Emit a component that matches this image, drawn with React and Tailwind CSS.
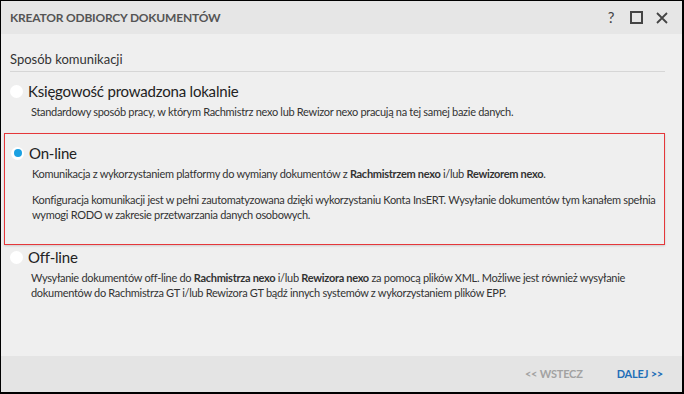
import React from "react";

const Radio = ({ checked }) => (
  <span className="w-[13px] h-[13px] rounded-full bg-white flex items-center justify-center shrink-0">
    {checked && <span className="w-[8px] h-[8px] rounded-full bg-[#1ba1e2]" />}
  </span>
);

const Option = ({ label, checked, children }) => (
  <div>
    <div className="flex items-center gap-[5px] h-[20px]">
      <Radio checked={checked} />
      <span className="text-[15px] leading-[20px] tracking-[-0.2px] text-[#222]">{label}</span>
    </div>
    <div className="pl-[21px] pt-[3px] text-[11px] leading-[15px] tracking-[-0.3px] text-[#333] space-y-[11px]">{children}</div>
  </div>
);

export default function App() {
  return (
    <div className="w-[684px] h-[394px] bg-black pl-px pt-px pr-[2px] pb-[2px] font-['Lato',sans-serif]">
      <div className="w-full h-full bg-[#efefef] flex flex-col">
        <div className="h-[33px] shrink-0 bg-[#e6e6e6] flex items-center pl-[9px] pr-[14px]">
          <span className="text-[12px] font-bold text-[#555] tracking-[-0.2px]">KREATOR ODBIORCY DOKUMENTÓW</span>
          <div className="ml-auto flex items-center gap-[13px] text-[#444]">
            <span className="text-[15px] leading-none w-[12px] text-center">?</span>
            <span className="w-[13px] h-[13px] border-[2px] border-[#444]" />
            <svg width="12" height="12" viewBox="0 0 12 12">
              <path d="M1 1 L11 11 M11 1 L1 11" stroke="#444" strokeWidth="1.8" />
            </svg>
          </div>
        </div>
        <div className="flex-1 px-[9px] pt-[17px]">
          <div className="text-[13px] leading-[16px] text-[#333] pb-[4px] border-b border-[#d6d6d6] mr-[8px]">Sposób komunikacji</div>
          <div className="pt-[9px]">
            <Option label="Księgowość prowadzona lokalnie">
              <p>Standardowy sposób pracy, w którym Rachmistrz nexo lub Rewizor nexo pracują na tej samej bazie danych.</p>
            </Option>
          </div>
          <div className="ml-[-6px] mr-[8px] mt-[14px] border border-[#e5373a] shadow-[0_1px_2px_rgba(0,0,0,0.15)] pl-[6px] pt-[9px] pb-[22px]">
            <Option label="On-line" checked>
              <p>
                Komunikacja z wykorzystaniem platformy do wymiany dokumentów z <b>Rachmistrzem nexo</b> i/lub <b>Rewizorem nexo</b>.
              </p>
              <p>
                Konfiguracja komunikacji jest w pełni zautomatyzowana dzięki wykorzystaniu Konta InsERT. Wysyłanie dokumentów tym kanałem spełnia
                <br />
                wymogi RODO w zakresie przetwarzania danych osobowych.
              </p>
            </Option>
          </div>
          <div className="pt-[2px] pr-[8px]">
            <Option label="Off-line">
              <p>
                Wysyłanie dokumentów off-line do <b>Rachmistrza nexo</b> i/lub <b>Rewizora nexo</b> za pomocą plików XML. Możliwe jest również wysyłanie
                <br />
                dokumentów do Rachmistrza GT i/lub Rewizora GT bądź innych systemów z wykorzystaniem plików EPP.
              </p>
            </Option>
          </div>
        </div>
        <div className="h-[36px] shrink-0 bg-[#e4e4e4] flex items-center justify-end pr-[19px] gap-[34px] text-[11px] tracking-[-0.2px] font-bold">
          <span className="text-[#a2a2a2]">&lt;&lt; WSTECZ</span>
          <span className="text-[#1f6fb8]">DALEJ &gt;&gt;</span>
        </div>
      </div>
    </div>
  );
}
